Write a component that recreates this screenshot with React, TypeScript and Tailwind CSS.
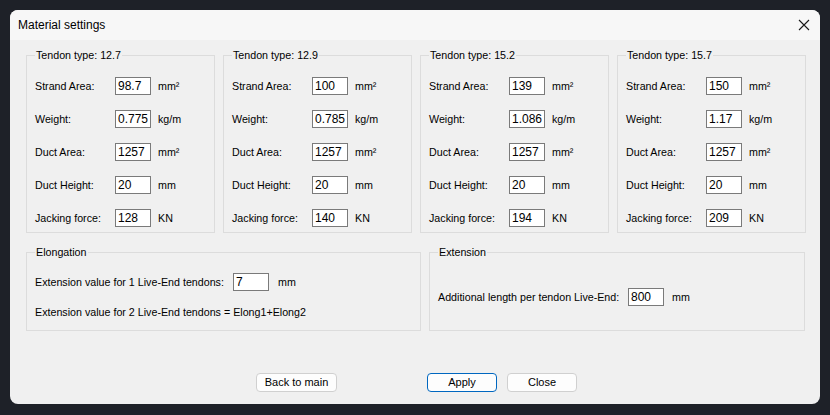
import React from "react";

const tendons = [
  { type: "12.7", strand: "98.7", weight: "0.775", duct: "1257", height: "20", force: "128" },
  { type: "12.9", strand: "100", weight: "0.785", duct: "1257", height: "20", force: "140" },
  { type: "15.2", strand: "139", weight: "1.086", duct: "1257", height: "20", force: "194" },
  { type: "15.7", strand: "150", weight: "1.17", duct: "1257", height: "20", force: "209" },
];

const Field = ({ value, className = "w-[36px]" }: { value: string; className?: string }) => (
  <div className={`${className} h-[18px] bg-white border border-[#7a7a7a] pl-[2px] leading-[16px] text-[12px]`}>
    {value}
  </div>
);

const Row = ({ label, value, unit }: { label: string; value: string; unit: string }) => (
  <div className="flex items-center h-[18px]">
    <span className="w-[80px]">{label}</span>
    <Field value={value} />
    <span className="ml-[7px]">{unit}</span>
  </div>
);

const Group = ({ title, className, children }: { title: string; className: string; children: React.ReactNode }) => (
  <fieldset className={`border border-[#dcdcdc] ${className}`}>
    <legend className="px-[1px] leading-[13px]">{title}</legend>
    {children}
  </fieldset>
);

const Button = ({ label, primary = false, className = "w-[70px]" }: { label: string; primary?: boolean; className?: string }) => (
  <button
    className={`${className} h-[19px] rounded-[4px] bg-[#fdfdfd] text-[11px] leading-[17px] border ${
      primary ? "border-[#0067c0]" : "border-[#d0d0d0]"
    }`}
  >
    {label}
  </button>
);

export default function App() {
  return (
    <div className="h-[415px] w-full bg-[#1e2128] pt-[10px] pl-[10px]" style={{ fontFamily: '"Liberation Sans", Arial, sans-serif' }}>
      <div className="w-[810px] h-[394px] rounded-[8px] overflow-hidden bg-[#f0f0f0] flex flex-col text-[10.7px] text-black">
        <div className="h-[30px] bg-[#f7f7f7] flex items-center justify-between pl-[8px] pr-[9px]">
          <span className="text-[12px]">Material settings</span>
          <svg width="12" height="12" viewBox="0 0 12 12" className="mr-[1px]">
            <path d="M1 1L11 11M11 1L1 11" stroke="#1a1a1a" strokeWidth="1.1" />
          </svg>
        </div>

        <div className="flex gap-[8px] pl-[16px] mt-[9px]">
          {tendons.map((t) => (
            <Group key={t.type} title={`Tendon type: ${t.type}`} className="w-[189px] h-[184px] pl-[8px] pt-[15px]">
              <div className="flex flex-col gap-[15px]">
                <Row label="Strand Area:" value={t.strand} unit="mm²" />
                <Row label="Weight:" value={t.weight} unit="kg/m" />
                <Row label="Duct Area:" value={t.duct} unit="mm²" />
                <Row label="Duct Height:" value={t.height} unit="mm" />
                <Row label="Jacking force:" value={t.force} unit="KN" />
              </div>
            </Group>
          ))}
        </div>

        <div className="flex gap-[8px] pl-[16px] mt-[13px]">
          <Group title="Elongation" className="w-[395px] h-[85px] pl-[8px] pt-[14px]">
            <div className="flex items-center h-[18px]">
              <span className="w-[198px]">Extension value for 1 Live-End tendons:</span>
              <Field value="7" />
              <span className="ml-[9px]">mm</span>
            </div>
            <div className="mt-[15px] leading-[13px]">Extension value for 2 Live-End tendons = Elong1+Elong2</div>
          </Group>
          <Group title="Extension" className="w-[376px] h-[85px] pl-[8px] pt-[29px]">
            <div className="flex items-center h-[18px]">
              <span className="w-[190px]">Additional length per tendon Live-End:</span>
              <Field value="800" />
              <span className="ml-[8px]">mm</span>
            </div>
          </Group>
        </div>

        <div className="flex justify-center mt-[42px] pl-[3px]">
          <Button label="Back to main" className="w-[81px]" />
          <div className="w-[90px]" />
          <Button label="Apply" primary />
          <div className="w-[10px]" />
          <Button label="Close" />
        </div>
      </div>
    </div>
  );
}
